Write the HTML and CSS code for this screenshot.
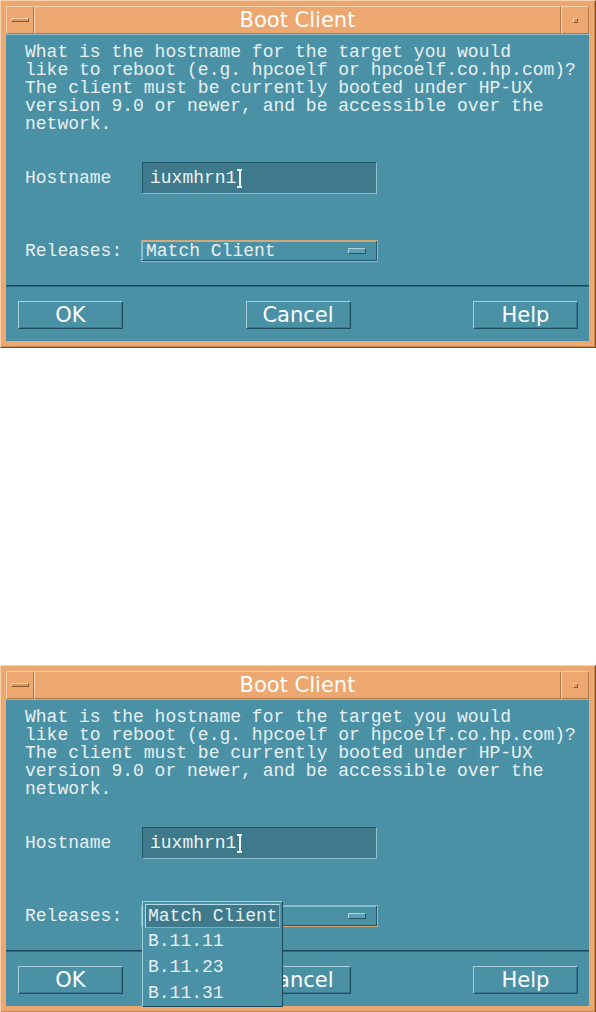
FILE: index.html
```html
<!DOCTYPE html>
<html lang="en">
<head>
<meta charset="UTF-8">
<meta name="viewport" content="width=device-width, initial-scale=1.0">
<title>Boot Client</title>
<link rel="stylesheet" href="styles.css">
</head>
<body>
<div class="screen">
    <div class="dialog">
        <div class="titlebar">
            <div class="tb-btn menu-btn"><span class="bar"></span></div>
            <div class="tb-title">Boot Client</div>
            <div class="tb-btn max-btn"><span class="dot"></span></div>
        </div>
        <div class="client">
            <div class="work">
                <p class="message">What is the hostname for the target you would
like to reboot (e.g. hpcoelf or hpcoelf.co.hp.com)?
The client must be currently booted under HP-UX
version 9.0 or newer, and be accessible over the
network.</p>
                <div class="field-row hostname-row">
                    <span class="label">Hostname</span>
                    <div class="textfield">iuxmhrn1<span class="ibeam"></span></div>
                </div>
                <div class="field-row releases-row">
                    <span class="label">Releases:</span>
                    <div class="option-btn"><span>Match Client</span><span class="indicator"></span></div>
                </div>
            </div>
            <div class="separator"></div>
            <div class="actions">
                <button class="push">OK</button>
                <button class="push">Cancel</button>
                <button class="push">Help</button>
            </div>
        </div>
    </div>

    <div class="dialog">
        <div class="titlebar">
            <div class="tb-btn menu-btn"><span class="bar"></span></div>
            <div class="tb-title">Boot Client</div>
            <div class="tb-btn max-btn"><span class="dot"></span></div>
        </div>
        <div class="client">
            <div class="work">
                <p class="message">What is the hostname for the target you would
like to reboot (e.g. hpcoelf or hpcoelf.co.hp.com)?
The client must be currently booted under HP-UX
version 9.0 or newer, and be accessible over the
network.</p>
                <div class="field-row hostname-row">
                    <span class="label">Hostname</span>
                    <div class="textfield">iuxmhrn1<span class="ibeam"></span></div>
                </div>
                <div class="field-row releases-row">
                    <span class="label">Releases:</span>
                    <div class="option-btn"><span>Match Client</span><span class="indicator"></span></div>
                </div>
            </div>
            <div class="separator"></div>
            <div class="actions">
                <button class="push">OK</button>
                <button class="push">Cancel</button>
                <button class="push">Help</button>
            </div>
        </div>
        <ul class="popup">
            <li class="current">Match Client</li>
            <li>B.11.11</li>
            <li>B.11.23</li>
            <li>B.11.31</li>
        </ul>
    </div>
</div>
</body>
</html>
```

FILE: styles.css
```css
body {
    margin: 0;
    background-color: #fff;
    font-family: "Liberation Mono", "DejaVu Sans Mono", monospace;
}
.screen {
    display: flex;
    flex-direction: column;
    gap: 317px;
    width: 596px;
}
.dialog {
    position: relative;
    box-sizing: border-box;
    width: 596px;
    height: 348px;
    padding: 5px 6px 6px 5px;
    background-color: #eca870;
    border: 1px solid;
    border-color: #f8d2ae #7c4c28 #7c4c28 #f8d2ae;
    box-shadow: inset -1px -1px 0 #c58650;
    display: flex;
    flex-direction: column;
}

/* title bar */
.titlebar {
    display: flex;
    height: 28px;
}
.tb-btn, .tb-title {
    box-sizing: border-box;
    border: 1px solid;
    border-color: #f8d2ae #b07848 #b07848 #f8d2ae;
    display: flex;
    align-items: center;
    justify-content: center;
}
.tb-btn {
    width: 28px;
}
.tb-title {
    flex: 1;
    font-family: "DejaVu Sans", sans-serif;
    font-size: 21px;
    color: #fff;
}
.menu-btn .bar {
    width: 16px;
    height: 2px;
    background-color: #d99660;
    border: 1px solid;
    border-color: #f8d2ae #8a5a30 #8a5a30 #f8d2ae;
}
.max-btn .dot {
    width: 3px;
    height: 3px;
    background-color: #d99660;
    border: 1px solid;
    border-color: #f8d2ae #8a5a30 #8a5a30 #f8d2ae;
}

/* client area */
.client {
    flex: 1;
    background-color: #4a91a6;
    border-top: 1px solid #8cc0cf;
    display: flex;
    flex-direction: column;
    color: #e8f0f2;
}
.work {
    padding: 8px 0 0 19px;
    height: 243px;
    box-sizing: border-box;
}
.message {
    margin: 0;
    font-size: 18px;
    line-height: 18px;
    white-space: pre;
}
.field-row {
    display: flex;
    align-items: center;
}
.label {
    width: 116px;
    font-size: 18px;
}
.hostname-row {
    margin-top: 29px;
}
.textfield {
    box-sizing: border-box;
    margin-left: 1px;
    width: 235px;
    height: 32px;
    padding-left: 7px;
    background-color: #3e7a8c;
    border: 1px solid;
    border-color: #22566a #8cc0cf #8cc0cf #22566a;
    font-size: 18px;
    display: flex;
    align-items: center;
    color: #eef5f6;
}
.ibeam {
    width: 5px;
    height: 19px;
    margin-left: 1px;
    border-top: 2px solid #eef5f6;
    border-bottom: 2px solid #eef5f6;
    background: linear-gradient(#eef5f6, #eef5f6) center / 2px 100% no-repeat;
    box-sizing: border-box;
}
.releases-row {
    margin-top: 46px;
}
.option-btn {
    box-sizing: border-box;
    width: 237px;
    height: 22px;
    border: 1px solid #d6a676;
    box-shadow: inset -1px -1px 0 #22566a, inset 1px 1px 0 #8cc0cf;
    display: flex;
    align-items: center;
    justify-content: space-between;
    padding: 0 11px 0 4px;
    font-size: 18px;
}
.indicator {
    box-sizing: border-box;
    width: 18px;
    height: 6px;
    background-color: #5fa0b3;
    border: 1px solid;
    border-color: #a8d2de #22566a #22566a #a8d2de;
}
.separator {
    height: 1px;
    margin-top: 7px;
    background-color: #1c4a5a;
    border-bottom: 1px solid #2f6a7c;
}
.actions {
    display: flex;
    justify-content: space-between;
    padding: 14px 11px 0 12px;
}
.push {
    width: 105px;
    height: 28px;
    margin: 0;
    padding: 0;
    background-color: #4a91a6;
    border: 1px solid;
    border-color: #a8d2de #1f4f5e #1f4f5e #a8d2de;
    box-shadow: inset -1px -1px 0 #3a7a8e;
    font-family: "DejaVu Sans", sans-serif;
    font-size: 21px;
    color: #fff;
}

/* option popup */
.popup {
    position: absolute;
    left: 141px;
    top: 235px;
    box-sizing: border-box;
    width: 141px;
    margin: 0;
    padding: 2px 2px 0 2px;
    list-style: none;
    background-color: #4a91a6;
    border: 1px solid;
    border-color: #a8d2de #1c4a5a #1c4a5a #a8d2de;
    color: #e8f0f2;
    font-size: 18px;
}
.popup li {
    height: 26px;
    line-height: 27px;
    padding-left: 3px;
}
.popup li.current {
    box-sizing: border-box;
    height: 24px;
    line-height: 22px;
    padding-left: 2px;
    background-color: #3e7a8c;
    border: 1px solid;
    border-color: #b8dce6 #7ab0c0 #7ab0c0 #b8dce6;
}
```
